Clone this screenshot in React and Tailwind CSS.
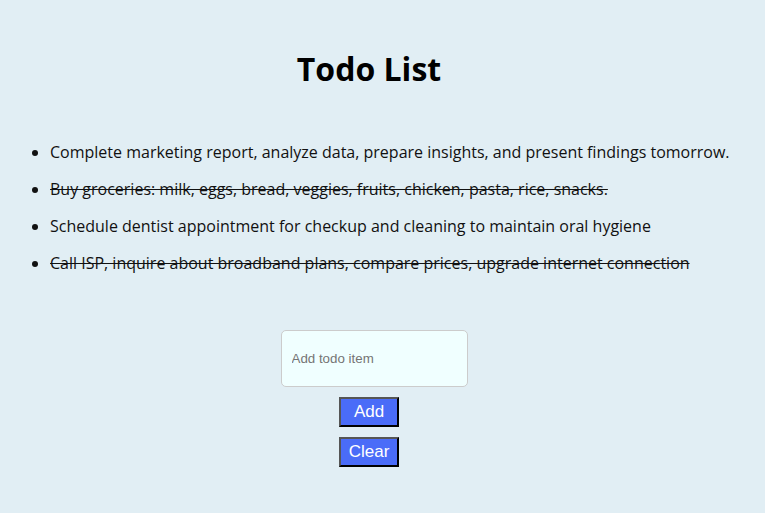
import React, { useState } from "react";

const initialTodos = [
  { text: "Complete marketing report, analyze data, prepare insights, and present findings tomorrow.", done: false },
  { text: "Buy groceries: milk, eggs, bread, veggies, fruits, chicken, pasta, rice, snacks.", done: true },
  { text: "Schedule dentist appointment for checkup and cleaning to maintain oral hygiene", done: false },
  { text: "Call ISP, inquire about broadband plans, compare prices, upgrade internet connection", done: true },
];

const buttonClass =
  "h-[30px] w-[60px] border-2 border-t-[#555] border-l-[#555] border-r-black border-b-black bg-[#4a6cf8] font-['Liberation_Sans',sans-serif] text-[17px] text-white";

const App = () => {
  const [todos, setTodos] = useState(initialTodos);
  const [value, setValue] = useState("");

  const addTodo = () => {
    if (!value.trim()) return;
    setTodos([...todos, { text: value.trim(), done: false }]);
    setValue("");
  };

  return (
    <div className="min-h-[513px] bg-[#e1eef4] font-['Open_Sans',sans-serif] text-[#111]">
      <h1 className="pr-[27px] pt-[47px] text-center text-[32px] font-bold leading-[44px] text-black">
        Todo List
      </h1>

      <ul className="mt-[43px] list-disc pl-[50px] text-[16px] leading-[37px]">
        {todos.map((todo, i) => (
          <li
            key={i}
            onClick={() =>
              setTodos(todos.map((t, j) => (j === i ? { ...t, done: !t.done } : t)))
            }
            className={todo.done ? "line-through cursor-pointer" : "cursor-pointer"}
          >
            {todo.text}
          </li>
        ))}
      </ul>

      <div className="mt-[48px] flex flex-col items-center pr-[27px]">
        <input
          value={value}
          onChange={(e) => setValue(e.target.value)}
          placeholder="Add todo item"
          className="ml-[10px] h-[57px] w-[187px] rounded-[5px] border border-[#ccc] bg-[#f0ffff] px-[10px] font-['Liberation_Sans',sans-serif] text-[13.333px] placeholder:text-[#757575] outline-none"
        />
        <button onClick={addTodo} className={`mt-[10px] ${buttonClass}`}>
          Add
        </button>
        <button onClick={() => setTodos([])} className={`mt-[10px] ${buttonClass}`}>
          Clear
        </button>
      </div>
    </div>
  );
};

export default App;
